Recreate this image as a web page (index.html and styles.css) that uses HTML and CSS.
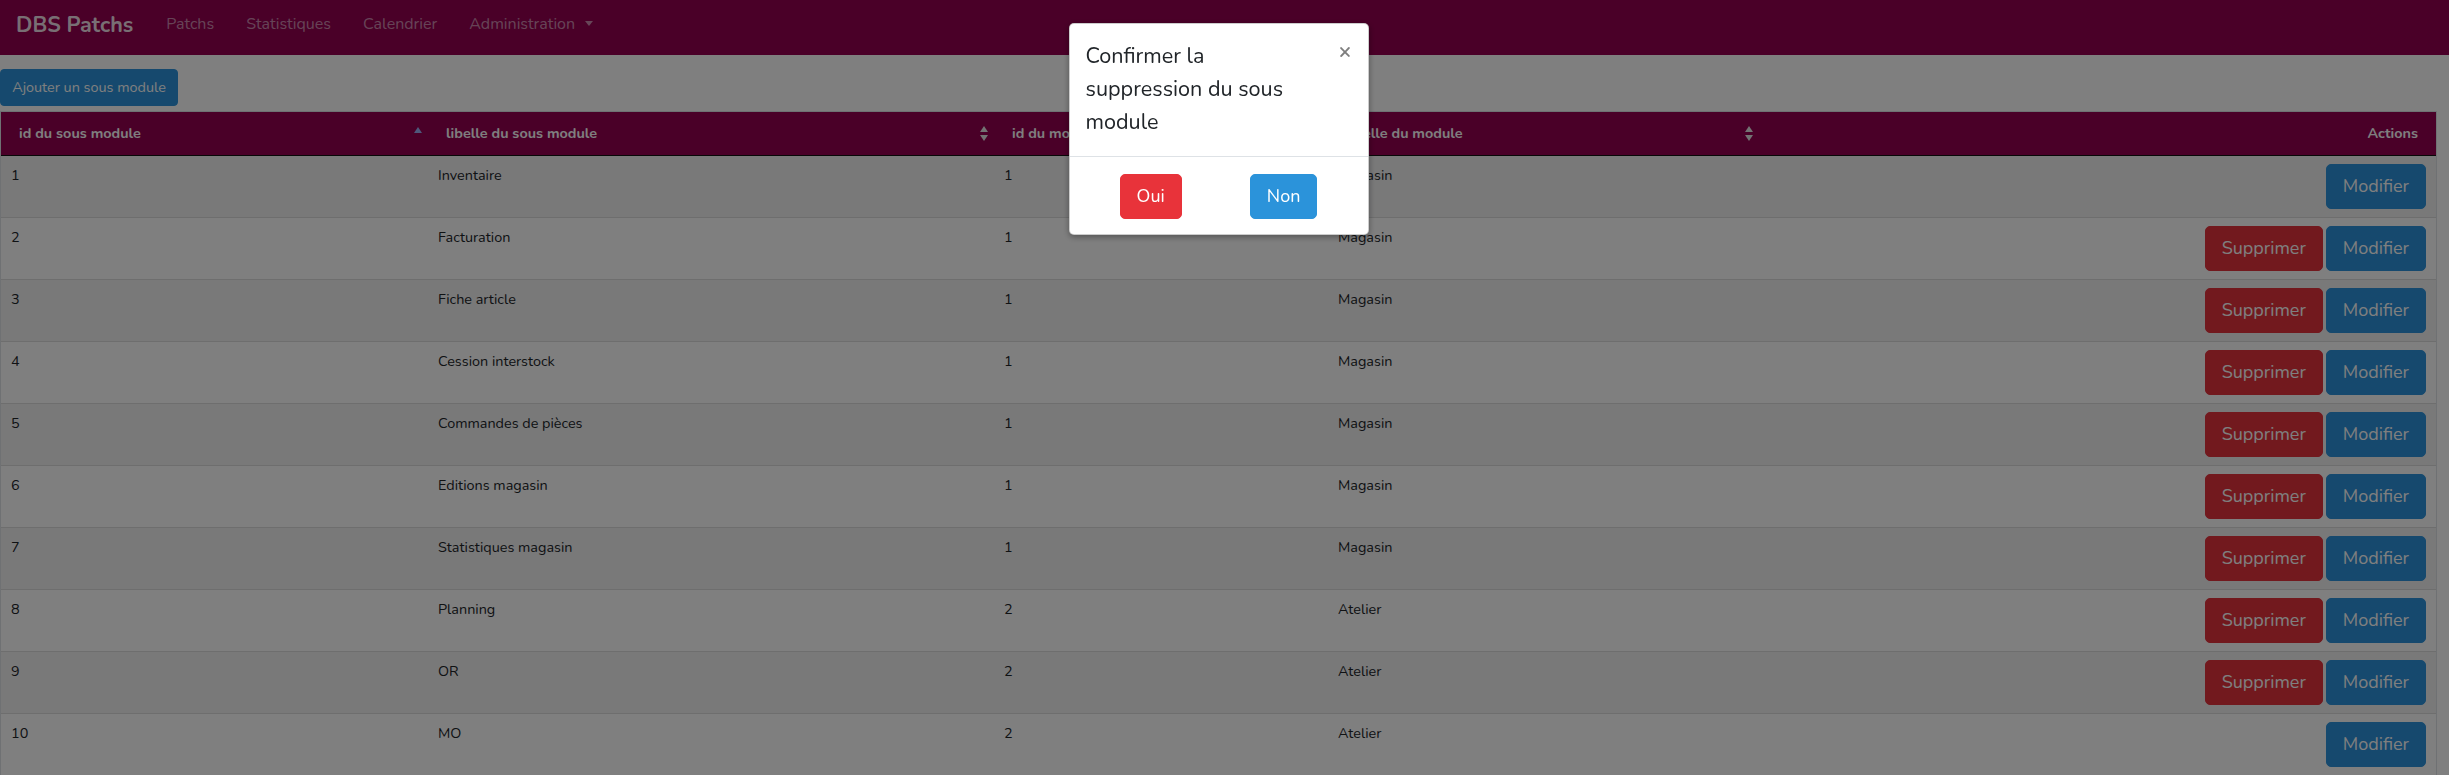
FILE: index.html
```html
<!DOCTYPE html>
<html lang="fr">
<head>
<meta charset="utf-8">
<title>DBS Patchs - Sous modules</title>
<link rel="stylesheet" href="styles.css">
</head>
<body>
<nav class="navbar">
  <a class="brand" href="#">DBS Patchs</a>
  <ul class="nav">
    <li><a class="nav-link" href="#">Patchs</a></li>
    <li><a class="nav-link" href="#">Statistiques</a></li>
    <li><a class="nav-link" href="#">Calendrier</a></li>
    <li><a class="nav-link dropdown-toggle" href="#">Administration</a></li>
  </ul>
</nav>

<main class="main">
  <button class="btn btn-primary btn-add">Ajouter un sous module</button>
  <table class="table">
    <colgroup>
      <col class="c1"><col class="c2"><col class="c3"><col class="c4"><col class="c5">
    </colgroup>
    <thead>
      <tr>
        <th><div class="th-in"><span>id du sous module</span><svg class="sort" viewBox="0 0 8 15"><polygon class="asc" points="4,1 8,7 0,7"/></svg></div></th>
        <th><div class="th-in"><span>libelle du sous module</span><svg class="sort" viewBox="0 0 8 15"><polygon class="both" points="4,0 8,6 0,6"/><polygon class="both" points="0,9 8,9 4,15"/></svg></div></th>
        <th><div class="th-in"><span>id du module</span><svg class="sort" viewBox="0 0 8 15"><polygon class="both" points="4,0 8,6 0,6"/><polygon class="both" points="0,9 8,9 4,15"/></svg></div></th>
        <th><div class="th-in"><span>libelle du module</span><svg class="sort" viewBox="0 0 8 15"><polygon class="both" points="4,0 8,6 0,6"/><polygon class="both" points="0,9 8,9 4,15"/></svg></div></th>
        <th class="th-actions">Actions</th>
      </tr>
    </thead>
    <tbody>
      <tr><td>1</td><td>Inventaire</td><td>1</td><td>Magasin</td><td class="actions"><div class="act"><button class="btn btn-lg btn-primary">Modifier</button></div></td></tr>
      <tr><td>2</td><td>Facturation</td><td>1</td><td>Magasin</td><td class="actions"><div class="act"><button class="btn btn-lg btn-danger">Supprimer</button><button class="btn btn-lg btn-primary">Modifier</button></div></td></tr>
      <tr><td>3</td><td>Fiche article</td><td>1</td><td>Magasin</td><td class="actions"><div class="act"><button class="btn btn-lg btn-danger">Supprimer</button><button class="btn btn-lg btn-primary">Modifier</button></div></td></tr>
      <tr><td>4</td><td>Cession interstock</td><td>1</td><td>Magasin</td><td class="actions"><div class="act"><button class="btn btn-lg btn-danger">Supprimer</button><button class="btn btn-lg btn-primary">Modifier</button></div></td></tr>
      <tr><td>5</td><td>Commandes de pièces</td><td>1</td><td>Magasin</td><td class="actions"><div class="act"><button class="btn btn-lg btn-danger">Supprimer</button><button class="btn btn-lg btn-primary">Modifier</button></div></td></tr>
      <tr><td>6</td><td>Editions magasin</td><td>1</td><td>Magasin</td><td class="actions"><div class="act"><button class="btn btn-lg btn-danger">Supprimer</button><button class="btn btn-lg btn-primary">Modifier</button></div></td></tr>
      <tr><td>7</td><td>Statistiques magasin</td><td>1</td><td>Magasin</td><td class="actions"><div class="act"><button class="btn btn-lg btn-danger">Supprimer</button><button class="btn btn-lg btn-primary">Modifier</button></div></td></tr>
      <tr><td>8</td><td>Planning</td><td>2</td><td>Atelier</td><td class="actions"><div class="act"><button class="btn btn-lg btn-danger">Supprimer</button><button class="btn btn-lg btn-primary">Modifier</button></div></td></tr>
      <tr><td>9</td><td>OR</td><td>2</td><td>Atelier</td><td class="actions"><div class="act"><button class="btn btn-lg btn-danger">Supprimer</button><button class="btn btn-lg btn-primary">Modifier</button></div></td></tr>
      <tr><td>10</td><td>MO</td><td>2</td><td>Atelier</td><td class="actions"><div class="act"><button class="btn btn-lg btn-primary">Modifier</button></div></td></tr>
    </tbody>
  </table>
</main>

<div class="backdrop"></div>

<div class="modal">
  <div class="modal-dialog">
    <div class="modal-content">
      <div class="modal-header">
        <h4 class="modal-title">Confirmer la suppression du sous module</h4>
        <button class="close" type="button">×</button>
      </div>
      <div class="modal-footer">
        <button class="btn btn-lg btn-modal-danger">Oui</button>
        <button class="btn btn-lg btn-modal-primary">Non</button>
      </div>
    </div>
  </div>
</div>
</body>
</html>
```

FILE: styles.css
```css
* { box-sizing: border-box; }

html, body {
  margin: 0;
  padding: 0;
  height: 100%;
  overflow: hidden;
}

body {
  font-family: "Nunito", "Lato", "Open Sans", sans-serif;
  font-size: 14.4px;
  line-height: 1.6;
  color: #212529;
  background: #ffffff;
}

/* NAVBAR */
.navbar {
  display: flex;
  align-items: center;
  height: 55px;
  padding: 0 16px;
  background: #940050;
}

.brand {
  font-size: 21.5px;
  font-weight: 700;
  color: rgba(255, 255, 255, 0.9);
  text-decoration: none;
  margin-right: 17px;
  line-height: 1;
  padding-bottom: 4px;
}

.nav {
  display: flex;
  list-style: none;
  margin: 0;
  padding: 0;
}

.nav-link {
  display: block;
  padding: 0 16px;
  font-size: 16px;
  color: rgba(255, 255, 255, 0.55);
  text-decoration: none;
  line-height: 1;
  padding-bottom: 7px;
}

.dropdown-toggle::after {
  content: "";
  display: inline-block;
  margin-left: 10px;
  vertical-align: 3px;
  border-top: 5px solid;
  border-left: 4.5px solid transparent;
  border-right: 4.5px solid transparent;
}

/* MAIN */
.main {
  padding: 14px 12px 0 0;
}

.btn {
  display: inline-block;
  font-family: inherit;
  font-size: 14.4px;
  line-height: 1.6;
  padding: 6px 12px;
  border: 1px solid transparent;
  border-radius: 4px;
  color: #fff;
  cursor: pointer;
  white-space: nowrap;
}

.btn-lg {
  font-size: 18px;
  line-height: 1.5;
  padding: 8px 16px;
  border-radius: 5px;
}

.btn-primary {
  background: #2c93dc;
  border-color: #2c93dc;
}

.btn-danger {
  background: #e4323c;
  border-color: #e4323c;
}

.btn-add {
  display: block;
  width: 178px;
  text-align: center;
  padding-left: 8px;
  padding-right: 8px;
}

/* TABLE */
.table {
  width: 100%;
  margin-top: 5px;
  table-layout: fixed;
  border-collapse: separate;
  border-spacing: 0;
  border: 1px solid #dee2e6;
  border-bottom: none;
}

.c1 { width: 427px; }
.c2 { width: 566px; }
.c3 { width: 334px; }
.c4 { width: 431px; }
.c5 { width: auto; }

.table th {
  background: #940050;
  color: #ffffff;
  font-weight: 700;
  text-align: left;
  padding: 10px 4px 10px 18px;
  border-bottom: 1px solid #111111;
}

.th-in {
  display: flex;
  align-items: center;
  justify-content: space-between;
}

.sort {
  width: 12px;
  height: 15px;
  padding: 0 2px;
  flex: none;
}

.sort .asc { fill: #9cb0f6; }
.sort .both { fill: #e6e6e6; }

.table th.th-actions {
  text-align: right;
  padding-right: 18px;
}

.table td {
  padding: 8px 10px;
  vertical-align: top;
  border-top: 1px solid #dddddd;
}

.table tbody tr:first-child td {
  border-top: none;
}

.table tbody tr:nth-child(odd) td {
  background: #f2f2f3;
}

.act {
  display: flex;
  justify-content: flex-end;
  gap: 3px;
}

/* BACKDROP + MODAL */
.backdrop {
  position: fixed;
  inset: 0;
  background: rgba(0, 0, 0, 0.5);
}

.modal {
  position: fixed;
  inset: 0;
  padding-right: 12px;
}

.modal-dialog {
  width: 300px;
  margin: 23px auto 0;
}

.modal-content {
  background: #fff;
  border: 1px solid rgba(0, 0, 0, 0.2);
  border-radius: 5px;
  box-shadow: 0 2px 6px rgba(0, 0, 0, 0.35);
}

.modal-header {
  display: flex;
  align-items: flex-start;
  padding: 16px 16px 17px 16px;
  border-bottom: 1px solid #dee2e6;
}

.modal-title {
  margin: 0;
  font-size: 21.6px;
  font-weight: 400;
  line-height: 33px;
  color: #212529;
}

.close {
  margin: -16px -16px -16px auto;
  padding: 17px 16px;
  background: none;
  border: none;
  font-family: inherit;
  font-size: 21.6px;
  font-weight: 700;
  line-height: 1;
  color: #000;
  opacity: 0.5;
}

.modal-footer {
  display: flex;
  justify-content: space-around;
  padding: 17px 16px 15px;
}

.btn-modal-danger {
  background: #e8333a;
  border-color: #e8333a;
}

.btn-modal-primary {
  background: #2b93da;
  border-color: #2b93da;
}
```
